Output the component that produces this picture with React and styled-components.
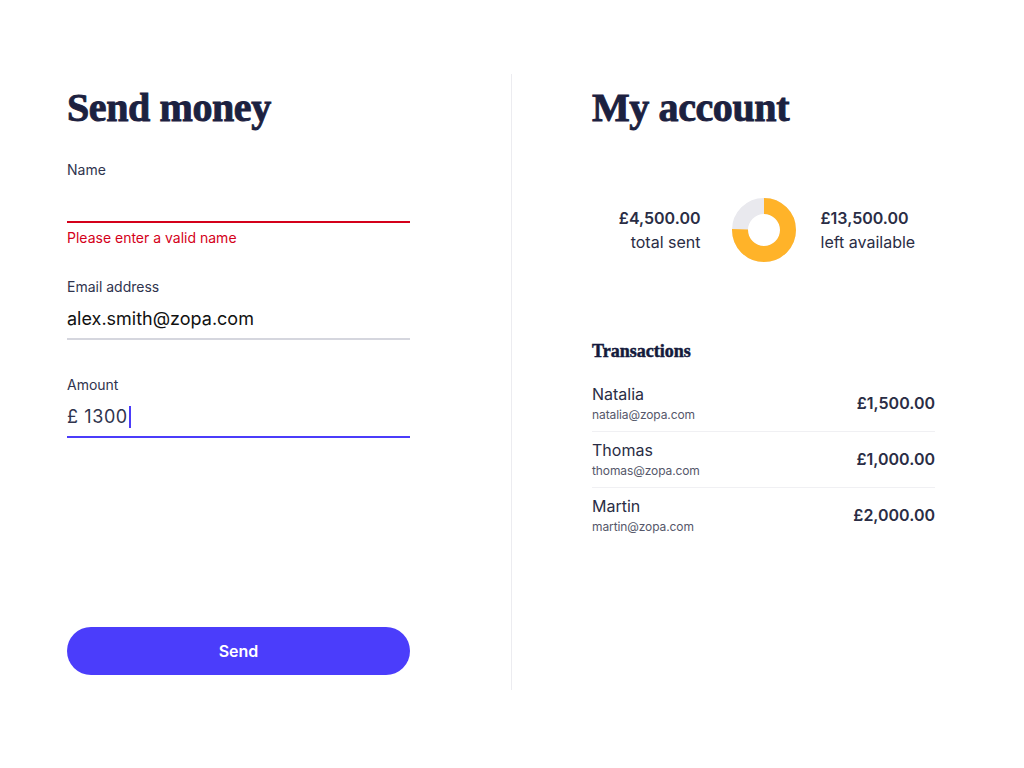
import React from "react";
import styled, { createGlobalStyle } from "styled-components";

const GlobalStyle = createGlobalStyle`
  html, body {
    margin: 0;
    padding: 0;
    background: #ffffff;
  }
  body {
    font-family: Inter, "Noto Sans", sans-serif;
    color: #2a2d45;
  }
`;

const Page = styled.div`
  display: flex;
  align-items: flex-start;
  padding: 74px 0 0 67px;
  height: 768px;
  box-sizing: border-box;
`;

const Column = styled.section`
  width: 343px;
  height: 616px;
  display: flex;
  flex-direction: column;
`;

const Divider = styled.div`
  width: 1px;
  height: 616px;
  background: #ececf0;
  margin: 0 80px 0 101px;
`;

const Heading = styled.h1`
  margin: 10px 0 0;
  font-family: "Liberation Serif", serif;
  font-weight: 700;
  font-size: 40px;
  line-height: 48px;
  color: #1c2140;
  letter-spacing: -0.4px;
  -webkit-text-stroke: 0.9px #1c2140;
`;

const Form = styled.div`
  margin-top: 28px;
  display: flex;
  flex-direction: column;
`;

const Field = styled.div`
  display: flex;
  flex-direction: column;
  margin-bottom: ${(p) => (p.$error ? "29px" : "35px")};
`;

const Label = styled.label`
  font-size: 14px;
  line-height: 20px;
  color: #30344e;
`;

const Value = styled.div`
  margin-top: 10px;
  height: 24px;
  padding-bottom: 7px;
  font-size: 18px;
  line-height: 24px;
  letter-spacing: ${(p) => (p.$muted ? "0.6px" : "0")};
  color: ${(p) => (p.$muted ? "#30344e" : "#111111")};
  border-bottom: 2px solid
    ${(p) => (p.$state === "error" ? "#d4001a" : p.$state === "focus" ? "#4b3cfa" : "#d5d6de")};
  display: flex;
  align-items: center;
`;

const Caret = styled.span`
  display: inline-block;
  width: 2px;
  height: 22px;
  background: #4b3cfa;
  margin-left: 1px;
`;

const ErrorText = styled.div`
  margin-top: 5px;
  font-size: 14px;
  line-height: 20px;
  color: #d4001a;
`;

const Button = styled.button`
  margin-top: auto;
  margin-bottom: 15px;
  width: 343px;
  height: 48px;
  border: none;
  border-radius: 24px;
  background: #4b3dfb;
  color: #ffffff;
  font-family: Inter, "Noto Sans", sans-serif;
  font-weight: 600;
  font-size: 16px;
`;

const Stats = styled.div`
  margin-top: 66px;
  display: grid;
  grid-template-columns: 1fr 64px 1fr;
  align-items: center;
`;

const Stat = styled.div`
  text-align: ${(p) => (p.$align === "right" ? "right" : "left")};
  padding: ${(p) => (p.$align === "right" ? "0 31px 0 0" : "0 0 0 25px")};
`;

const StatAmount = styled.div`
  font-size: 16px;
  line-height: 24px;
  font-weight: 600;
  color: #2a2d45;
`;

const StatLabel = styled.div`
  font-size: 16px;
  line-height: 24px;
  color: #2a2d45;
`;

const SubHeading = styled.h2`
  margin: 77px 0 13px;
  font-family: "Liberation Serif", serif;
  font-weight: 700;
  font-size: 18px;
  line-height: 24px;
  color: #141a3c;
  -webkit-text-stroke: 0.5px #141a3c;
`;

const List = styled.ul`
  list-style: none;
  margin: 0;
  padding: 0;
`;

const Row = styled.li`
  display: flex;
  align-items: center;
  justify-content: space-between;
  padding: 7px 0 8px;
  border-bottom: 1px solid ${(p) => (p.$last ? "transparent" : "#f0f0f3")};
`;

const Who = styled.div`
  display: flex;
  flex-direction: column;
`;

const Name = styled.div`
  font-size: 16px;
  line-height: 22px;
  color: #2a2d45;
`;

const Email = styled.div`
  margin-top: 2px;
  font-size: 12px;
  line-height: 16px;
  letter-spacing: -0.1px;
  color: #55576a;
`;

const Amount = styled.div`
  font-size: 16px;
  font-weight: 600;
  color: #2a2d45;
`;

function Donut() {
  const r = 24;
  const c = 2 * Math.PI * r;
  return (
    <svg width="64" height="64" viewBox="0 0 64 64">
      <circle cx="32" cy="32" r={r} fill="none" stroke="#e9e9ee" strokeWidth="16" />
      <circle
        cx="32"
        cy="32"
        r={r}
        fill="none"
        stroke="#ffb329"
        strokeWidth="16"
        strokeDasharray={`${c * 0.75} ${c}`}
        transform="rotate(-90 32 32)"
      />
    </svg>
  );
}

const transactions = [
  { name: "Natalia", email: "natalia@zopa.com", amount: "£1,500.00" },
  { name: "Thomas", email: "thomas@zopa.com", amount: "£1,000.00" },
  { name: "Martin", email: "martin@zopa.com", amount: "£2,000.00" },
];

export default function App() {
  return (
    <>
      <GlobalStyle />
      <Page>
        <Column>
          <Heading>Send money</Heading>
          <Form>
            <Field $error>
              <Label>Name</Label>
              <Value $state="error" />
              <ErrorText>Please enter a valid name</ErrorText>
            </Field>
            <Field>
              <Label>Email address</Label>
              <Value>alex.smith@zopa.com</Value>
            </Field>
            <Field>
              <Label>Amount</Label>
              <Value $state="focus" $muted>
                £ 1300
                <Caret />
              </Value>
            </Field>
          </Form>
          <Button>Send</Button>
        </Column>
        <Divider />
        <Column>
          <Heading>My account</Heading>
          <Stats>
            <Stat $align="right">
              <StatAmount>£4,500.00</StatAmount>
              <StatLabel>total sent</StatLabel>
            </Stat>
            <Donut />
            <Stat>
              <StatAmount>£13,500.00</StatAmount>
              <StatLabel>left available</StatLabel>
            </Stat>
          </Stats>
          <SubHeading>Transactions</SubHeading>
          <List>
            {transactions.map((t, i) => (
              <Row key={t.name} $last={i === transactions.length - 1}>
                <Who>
                  <Name>{t.name}</Name>
                  <Email>{t.email}</Email>
                </Who>
                <Amount>{t.amount}</Amount>
              </Row>
            ))}
          </List>
        </Column>
      </Page>
    </>
  );
}
